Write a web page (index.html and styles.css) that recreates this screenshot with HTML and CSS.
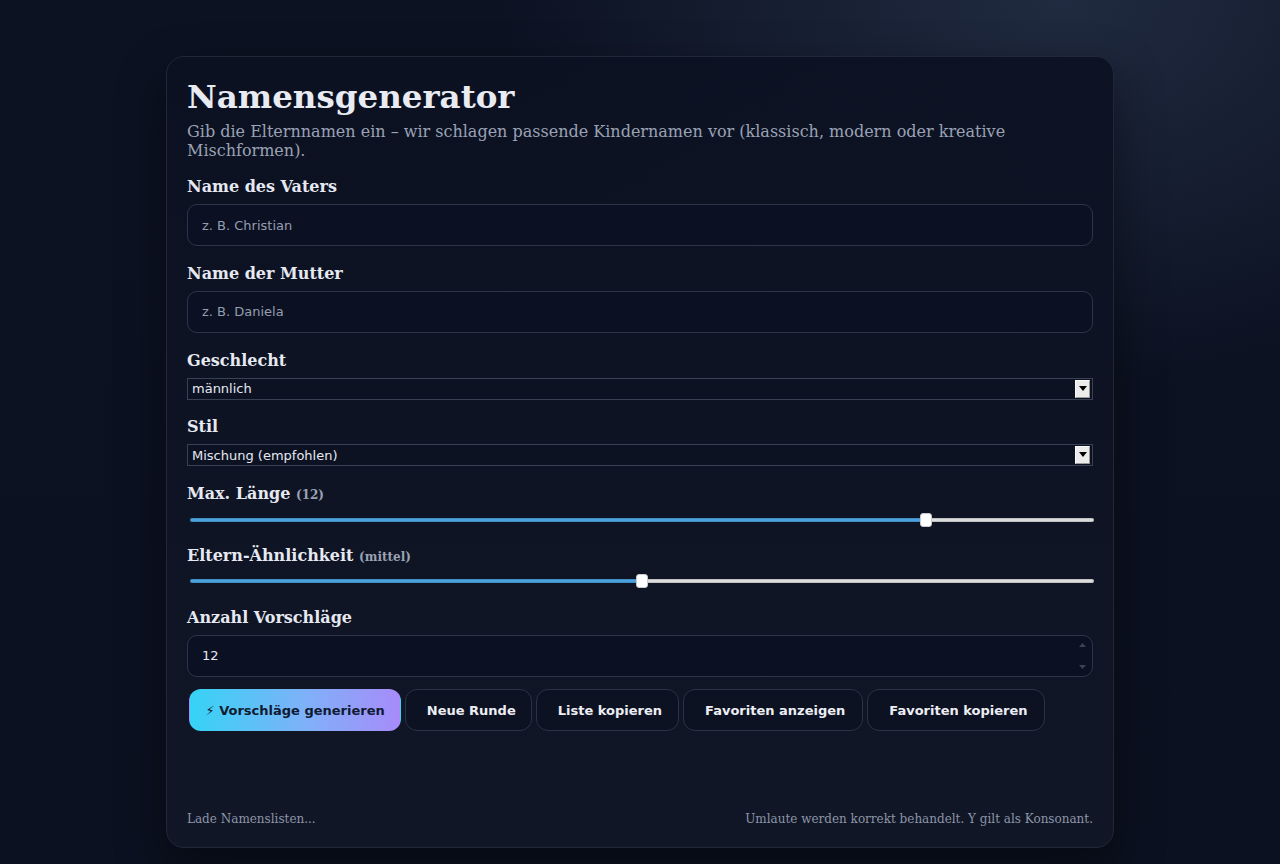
FILE: index.html
```html
<!DOCTYPE html>
<html lang="de">
<head>
<meta charset="utf-8">
<title>Namensgenerator</title>
<link rel="stylesheet" href="styles.css">
</head>
<body>
<div class="page">
  <main class="card">
    <h1 class="title">Namensgenerator</h1>
    <p class="subtitle">Gib die Elternnamen ein – wir schlagen passende Kindernamen vor (klassisch, modern oder kreative Mischformen).</p>

    <div class="field">
      <label class="label" for="father">Name des Vaters</label>
      <input class="text-input" id="father" type="text" placeholder="z. B. Christian">
    </div>

    <div class="field">
      <label class="label" for="mother">Name der Mutter</label>
      <input class="text-input" id="mother" type="text" placeholder="z. B. Daniela">
    </div>

    <div class="field">
      <label class="label" for="gender">Geschlecht</label>
      <div class="select-wrap">
        <select class="select" id="gender">
          <option>männlich</option>
          <option>weiblich</option>
          <option>neutral</option>
        </select>
        <span class="select-arrow"><svg width="8" height="5" viewBox="0 0 8 5"><polygon points="0,0 8,0 4,5" fill="#000"/></svg></span>
      </div>
    </div>

    <div class="field">
      <label class="label" for="style">Stil</label>
      <div class="select-wrap">
        <select class="select" id="style">
          <option>Mischung (empfohlen)</option>
          <option>klassisch</option>
          <option>modern</option>
        </select>
        <span class="select-arrow"><svg width="8" height="5" viewBox="0 0 8 5"><polygon points="0,0 8,0 4,5" fill="#000"/></svg></span>
      </div>
    </div>

    <div class="field">
      <label class="label" for="maxlen">Max. Länge <span class="hint">(12)</span></label>
      <input class="range" id="maxlen" type="range" min="3" max="14" value="12" style="--fill: 81.4%">
    </div>

    <div class="field">
      <label class="label" for="sim">Eltern-Ähnlichkeit <span class="hint">(mittel)</span></label>
      <input class="range" id="sim" type="range" min="0" max="100" value="50" style="--fill: 50%">
    </div>

    <div class="field field-last">
      <label class="label" for="count">Anzahl Vorschläge</label>
      <div class="number-wrap">
        <input class="text-input number-input" id="count" type="number" value="12" min="1" max="50">
        <span class="spinner">
          <svg width="7" height="4" viewBox="0 0 7 4"><polygon points="0,4 7,4 3.5,0" fill="#3a4253"/></svg>
          <svg width="7" height="4" viewBox="0 0 7 4"><polygon points="0,0 7,0 3.5,4" fill="#3a4253"/></svg>
        </span>
      </div>
    </div>

    <div class="actions">
      <button class="btn btn-primary">⚡ Vorschläge generieren</button>
      <button class="btn">Neue Runde</button>
      <button class="btn">Liste kopieren</button>
      <button class="btn btn-wide">Favoriten anzeigen</button>
      <button class="btn btn-wide">Favoriten kopieren</button>
    </div>

    <div class="results"></div>

    <footer class="footer">
      <span>Lade Namenslisten...</span>
      <span>Umlaute werden korrekt behandelt. Y gilt als Konsonant.</span>
    </footer>
  </main>
</div>
</body>
</html>
```

FILE: styles.css
```css
html, body {
  margin: 0;
  padding: 0;
  height: 100%;
}

body {
  background-color: #0b1120;
  background-image:
    radial-gradient(ellipse 560px 380px at 1060px 0px, rgba(40, 52, 76, 0.72), rgba(40, 52, 76, 0) 100%),
    linear-gradient(180deg, #0c1222 0%, #0b1120 100%);
  background-attachment: fixed;
  color: #e6e9f1;
  font-family: "DejaVu Serif", serif;
}

.page {
  padding-top: 56px;
  display: flex;
  justify-content: center;
}

.card {
  width: 906px;
  padding: 20px 20px 21px;
  border: 1px solid #1f2739;
  border-radius: 18px;
  background: linear-gradient(180deg, rgba(11, 17, 33, 0.92), rgba(17, 23, 38, 0.92));
  box-shadow: 0 20px 50px rgba(0, 0, 0, 0.45);
}

.title {
  margin: 0 0 6px;
  font-size: 32.5px;
  font-weight: 700;
  color: #e8ebf2;
}

.subtitle {
  margin: 0 0 17px;
  font-size: 16px;
  color: #9aa2b5;
}

.field {
  margin-bottom: 17.75px;
}

.field-last {
  margin-bottom: 12.7px;
}

.label {
  display: block;
  margin-bottom: 8px;
  font-size: 16px;
  font-weight: 700;
  color: #e6e9f1;
}

.hint {
  font-size: 12px;
  color: #9aa2b5;
}

.text-input {
  display: block;
  box-sizing: border-box;
  width: 100%;
  height: 42px;
  padding: 0 14px;
  border: 1px solid #2c3549;
  border-radius: 10px;
  background: #0b1122;
  color: #e6e9f1;
  font-family: "DejaVu Sans", sans-serif;
  font-size: 13px;
  outline: none;
}

.text-input::placeholder {
  color: #959db0;
}

.number-wrap {
  position: relative;
}

.number-input {
  -moz-appearance: textfield;
}

.number-input::-webkit-inner-spin-button,
.number-input::-webkit-outer-spin-button {
  -webkit-appearance: none;
  margin: 0;
}

.spinner {
  position: absolute;
  top: 8px;
  right: 7px;
  height: 26px;
  display: flex;
  flex-direction: column;
  justify-content: space-between;
  pointer-events: none;
}

.spinner svg {
  display: block;
}

.select-wrap {
  position: relative;
}

.select {
  display: block;
  box-sizing: border-box;
  width: 100%;
  height: 22px;
  margin: 0;
  padding: 0 0 0 4px;
  border: 1px solid #394154;
  border-radius: 0;
  background: #0c1222;
  color: #e6e9f1;
  font-family: "DejaVu Sans", sans-serif;
  font-size: 13px;
  -webkit-appearance: none;
  appearance: none;
  outline: none;
}

.select-arrow {
  position: absolute;
  top: 2px;
  right: 3px;
  width: 15px;
  height: 18px;
  box-sizing: border-box;
  display: flex;
  align-items: center;
  justify-content: center;
  padding-bottom: 1px;
  background: #ececec;
  border-top: 1px solid #fafafa;
  border-left: 1px solid #fafafa;
  border-right: 1px solid #9a9a9a;
  border-bottom: 1px solid #9a9a9a;
  pointer-events: none;
}

.range {
  display: block;
  width: calc(100% - 2px);
  height: 17px;
  margin: 0 0 0 3px;
  padding: 0;
  background: transparent;
  -webkit-appearance: none;
  appearance: none;
}

.range::-webkit-slider-runnable-track {
  height: 4px;
  border-radius: 2px;
  background: linear-gradient(90deg, #4aa2de 0%, #4aa2de var(--fill), #dcdcdc var(--fill), #dcdcdc 100%);
  box-shadow: inset 0 0 0 1px rgba(0, 0, 0, 0.12);
}

.range::-webkit-slider-thumb {
  -webkit-appearance: none;
  appearance: none;
  width: 12px;
  height: 14px;
  margin-top: -5px;
  box-sizing: border-box;
  border: 1px solid #c9c9c9;
  border-radius: 3px;
  background: #ffffff;
}

.actions {
  display: flex;
  gap: 4px;
  padding-left: 2px;
}

.btn {
  box-sizing: border-box;
  height: 42px;
  margin: 0;
  padding: 0 15.5px 0 20.5px;
  border: 1px solid #2a3346;
  border-radius: 12px;
  background: #0c1222;
  color: #eceef4;
  font-family: "DejaVu Sans", sans-serif;
  font-size: 13px;
  font-weight: 700;
  cursor: pointer;
}

.btn-wide {
  padding: 0 16.5px 0 21.5px;
}

.btn-primary {
  padding: 0 15.5px;
  border-color: transparent;
  background: linear-gradient(90deg, #35d3f5 0%, #7fb1f8 55%, #a78bfa 100%);
  color: #0f1a33;
}

.results {
  height: 80.5px;
}

.footer {
  display: flex;
  justify-content: space-between;
  font-size: 12px;
  color: #8d95a8;
}
```
